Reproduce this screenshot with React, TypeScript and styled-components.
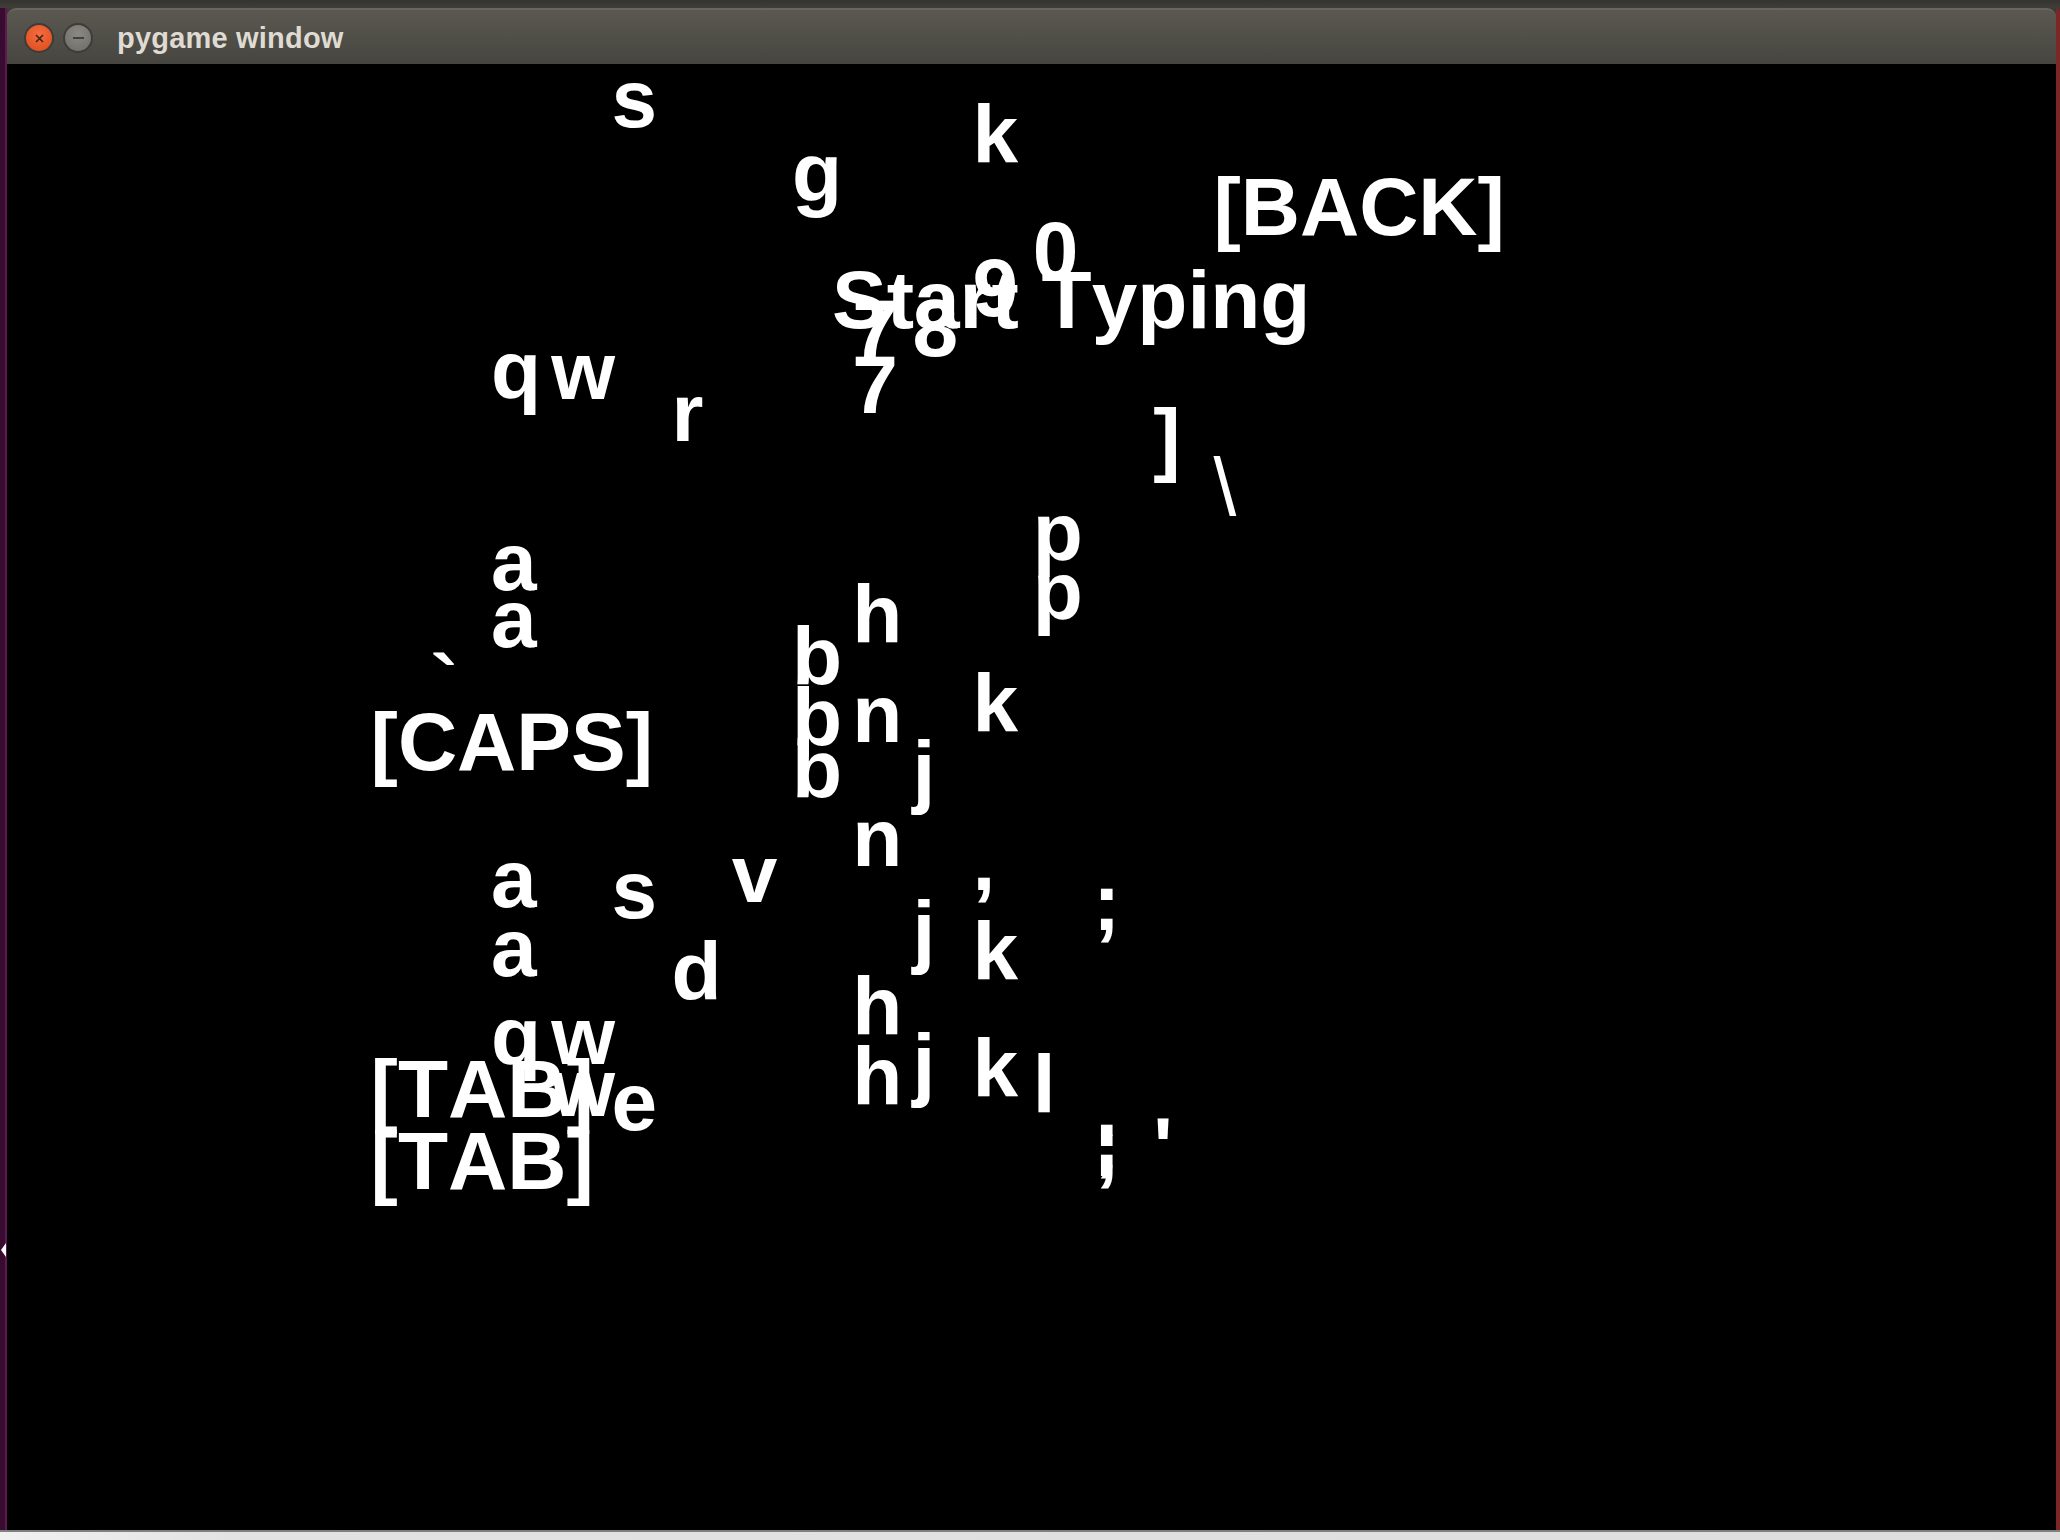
import React from 'react';
import styled, { createGlobalStyle } from 'styled-components';

const GlobalStyle = createGlobalStyle`
  html, body {
    margin: 0;
    padding: 0;
    background: #3b3a36;
  }
  body {
    width: 2060px;
    height: 1540px;
    overflow: hidden;
  }
`;

// geometry of the pygame surface inside the screenshot
const CANVAS_LEFT = 7;
const CANVAS_TOP = 64;
const BASELINE_OFFSET = 69.4; // 82px Liberation Sans, line-height 82px
const col = (n: number) => 491 + 60.2 * n;

type Key = { text: string; x: number; base: number; thin?: boolean };

const keys: Key[] = [
  { text: 's', x: col(2), base: 127 },
  { text: 'k', x: col(8), base: 162 },
  { text: 'g', x: col(5), base: 201 },
  { text: '[BACK]', x: col(12), base: 235 },
  { text: '0', x: col(9), base: 279 },
  { text: '9', x: col(8), base: 316 },
  { text: 'Start Typing', x: 832, base: 328 },
  { text: '7', x: col(6), base: 357 },
  { text: '8', x: col(7), base: 356 },
  { text: '7', x: col(6), base: 413 },
  { text: 'q', x: col(0), base: 398 },
  { text: 'w', x: col(1), base: 399 },
  { text: 'r', x: col(3), base: 441 },
  { text: ']', x: col(11), base: 466 },
  { text: '\\', x: col(12), base: 515, thin: true },
  { text: 'p', x: col(9), base: 560 },
  { text: 'p', x: col(9), base: 619 },
  { text: 'a', x: col(0), base: 590 },
  { text: 'a', x: col(0), base: 647 },
  { text: 'h', x: col(6), base: 642 },
  { text: 'b', x: col(5), base: 684 },
  { text: 'b', x: col(5), base: 745 },
  { text: 'b', x: col(5), base: 797 },
  { text: 'n', x: col(6), base: 742 },
  { text: '`', x: col(-1), base: 712 },
  { text: '[CAPS]', x: col(-2), base: 770 },
  { text: 'k', x: col(8), base: 731 },
  { text: 'j', x: col(7), base: 798 },
  { text: 'n', x: col(6), base: 866 },
  { text: 'a', x: col(0), base: 907 },
  { text: 's', x: col(2), base: 918 },
  { text: 'v', x: col(4), base: 902 },
  { text: ',', x: col(8), base: 890 },
  { text: ';', x: col(10), base: 930 },
  { text: 'j', x: col(7), base: 958 },
  { text: 'k', x: col(8), base: 979 },
  { text: 'a', x: col(0), base: 976 },
  { text: 'd', x: col(3), base: 999 },
  { text: 'h', x: col(6), base: 1034 },
  { text: 'q', x: col(0), base: 1064 },
  { text: 'w', x: col(1), base: 1064 },
  { text: 'k', x: col(8), base: 1096 },
  { text: 'j', x: col(7), base: 1091 },
  { text: 'h', x: col(6), base: 1104 },
  { text: 'l', x: col(9), base: 1112 },
  { text: '[TAB]', x: col(-2), base: 1117 },
  { text: 'w', x: col(1), base: 1116 },
  { text: 'e', x: col(2), base: 1130 },
  { text: '[TAB]', x: col(-2), base: 1189 },
  { text: ';', x: col(10), base: 1166 },
  { text: ';', x: col(10), base: 1176 },
  { text: "'", x: col(11), base: 1175 },
];

const Desktop = styled.div`
  width: 2060px;
  height: 1540px;
  display: flex;
  flex-direction: column;
  background: #3b3a36;
  overflow: hidden;
`;

const TopStrip = styled.div`
  flex: none;
  height: 8px;
  background: linear-gradient(#34332f, #3f3e39);
`;

const Middle = styled.div`
  flex: 1;
  display: flex;
  min-height: 0;
`;

const LeftEdge = styled.div`
  flex: none;
  position: relative;
  width: 7px;
  background: linear-gradient(to right, #3a0b31 0, #3a0b31 5px, #5c1a4e 5px);
`;

const Pointer = styled.svg`
  position: absolute;
  left: 0;
  top: 1233px;
`;

const RightEdge = styled.div`
  flex: none;
  width: 4px;
  border-top-right-radius: 6px;
  background: #7c2626;
`;

const Window = styled.div`
  flex: 1;
  display: flex;
  flex-direction: column;
  min-width: 0;
`;

const TitleBar = styled.div`
  flex: none;
  height: 56px;
  display: flex;
  align-items: center;
  padding: 2px 0 0 17px;
  box-sizing: border-box;
  border-top: 2px solid #67655d;
  border-radius: 9px 9px 0 0;
  background: linear-gradient(#5a5851, #46453f);
`;

const Controls = styled.div`
  display: flex;
  gap: 9px;
`;

const WindowButton = styled.div<{ $kind: 'close' | 'min' }>`
  width: 30px;
  height: 30px;
  border-radius: 50%;
  box-sizing: border-box;
  border: 2px solid #3d3c38;
  display: flex;
  align-items: center;
  justify-content: center;
  background: ${({ $kind }) =>
    $kind === 'close'
      ? 'radial-gradient(circle at 50% 35%, #f56c3f, #dc4a1b)'
      : 'radial-gradient(circle at 50% 35%, #8a8984, #6c6b66)'};
`;

const Title = styled.span`
  margin-left: 24px;
  font: bold 29px "Liberation Sans", Arial, sans-serif;
  color: #dfdbd2;
  letter-spacing: 0.2px;
`;

const Canvas = styled.div`
  flex: 1;
  position: relative;
  background: #000;
  overflow: hidden;
`;

const Glyph = styled.span<{ $x: number; $base: number; $thin?: boolean }>`
  position: absolute;
  left: ${({ $x }) => $x - CANVAS_LEFT}px;
  top: ${({ $base }) => $base - CANVAS_TOP - BASELINE_OFFSET}px;
  font-family: "Liberation Sans", Arial, sans-serif;
  font-weight: ${({ $thin }) => ($thin ? 'normal' : 'bold')};
  font-size: 82px;
  line-height: 82px;
  font-kerning: none;
  white-space: pre;
  color: #fff;
`;

const BottomBar = styled.div`
  flex: none;
  height: 8px;
  border-top: 2px solid #808080;
  background: linear-gradient(to right, #f1f1f1, #e2e2e2 12%, #dedede);
`;

const App: React.FC = () => {
  return (
    <>
      <GlobalStyle />
      <Desktop>
        <TopStrip />
        <Middle>
          <LeftEdge>
            <Pointer width="7" height="18" viewBox="0 0 7 18">
              <path d="M6 2 L1 9 L6 16 Z" fill="#ffffff" />
            </Pointer>
          </LeftEdge>
          <Window>
            <TitleBar>
              <Controls>
                <WindowButton $kind="close">
                  <svg width="11" height="11" viewBox="0 0 11 11">
                    <path d="M2 2 L9 9 M9 2 L2 9" stroke="#3b2418" strokeWidth="1.6" />
                  </svg>
                </WindowButton>
                <WindowButton $kind="min">
                  <svg width="13" height="4" viewBox="0 0 13 4">
                    <path d="M1 2 H12" stroke="#3c3b37" strokeWidth="1.8" />
                  </svg>
                </WindowButton>
              </Controls>
              <Title>pygame window</Title>
            </TitleBar>
            <Canvas>
              {keys.map((k, i) => (
                <Glyph key={i} $x={k.x} $base={k.base} $thin={k.thin}>
                  {k.text}
                </Glyph>
              ))}
            </Canvas>
          </Window>
          <RightEdge />
        </Middle>
        <BottomBar />
      </Desktop>
    </>
  );
};

export default App;
